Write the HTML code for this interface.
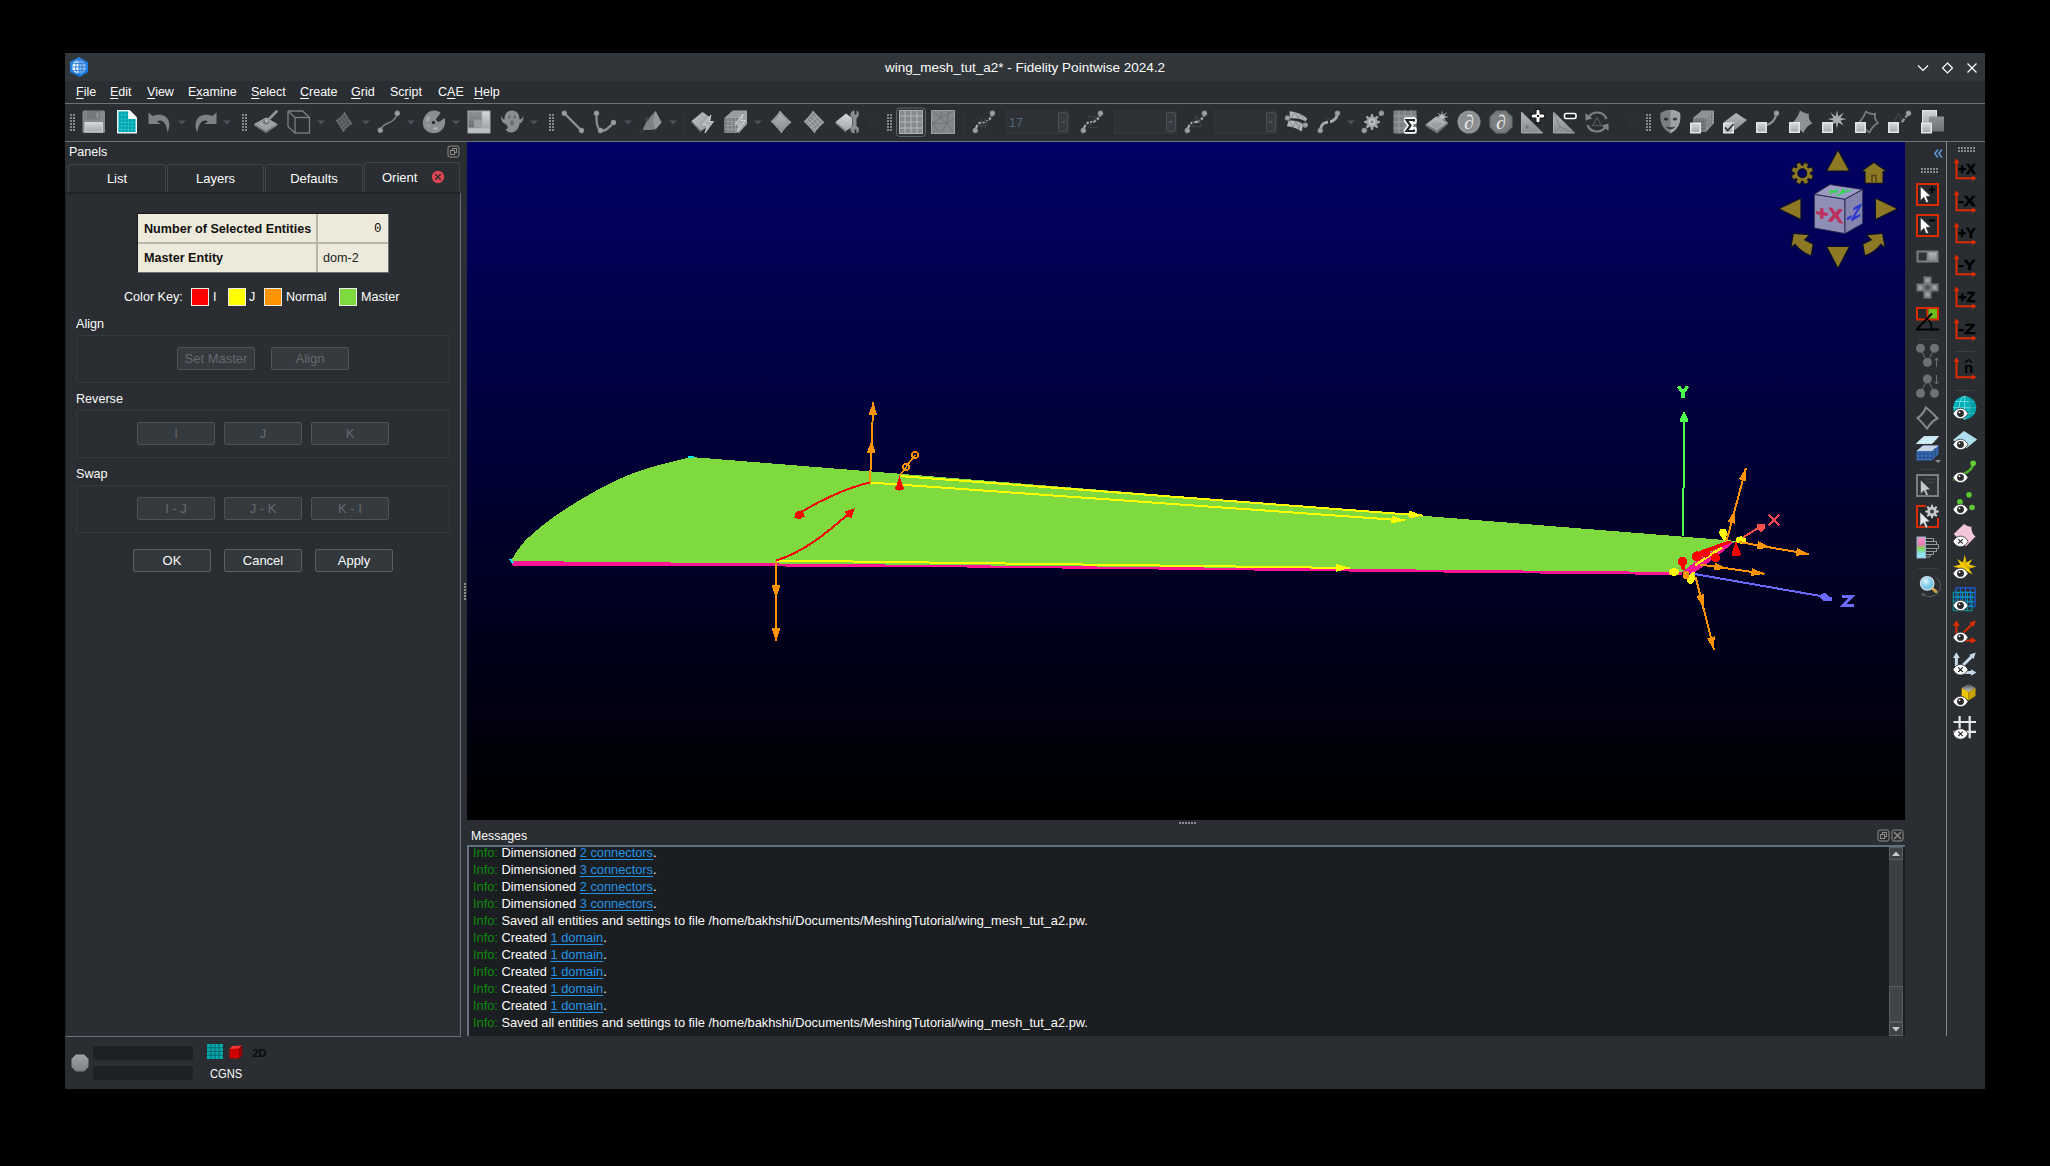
<!DOCTYPE html>
<html>
<head>
<meta charset="utf-8">
<title>wing_mesh_tut_a2* - Fidelity Pointwise 2024.2</title>
<style>
html,body{margin:0;padding:0;background:#000;}
body{width:2050px;height:1166px;position:relative;overflow:hidden;font-family:"Liberation Sans",sans-serif;font-size:13px;color:#fcfcfc;}
.abs{position:absolute;}
#win{position:absolute;left:65px;top:53px;width:1920px;height:1036px;background:#2a2e32;}
#titlebar{position:absolute;left:0;top:0;width:1920px;height:28px;background:#31363b;}
#title{position:absolute;left:0;top:0;width:1920px;height:28px;line-height:30px;text-align:center;font-size:13.5px;color:#fcfcfc;}
.menu{position:absolute;top:30px;height:18px;line-height:18px;font-size:12.5px;color:#fcfcfc;white-space:nowrap;}
.menu u{text-decoration:underline;text-underline-offset:2px;}
.hline{position:absolute;left:0;width:1920px;height:1px;background:#6f7275;}
.t{position:absolute;white-space:nowrap;}
/* panel */
.tab{position:absolute;top:110px;height:29px;border:1px solid #3f4448;border-bottom:none;border-radius:3px 3px 0 0;box-sizing:border-box;text-align:center;line-height:29px;font-size:13px;background:#2a2e32;}
.btn{position:absolute;height:23px;box-sizing:border-box;border:1px solid #5a5f63;border-radius:2px;background:#33383c;text-align:center;line-height:21px;font-size:13px;color:#fcfcfc;}
.btn.dis{color:#65696d;border-color:#4d5256;background:#353a3e;}
.grp{position:absolute;left:11px;width:374px;box-sizing:border-box;border:1px solid #34393d;border-radius:2px;}
.sw{position:absolute;top:235px;width:18px;height:18px;box-sizing:border-box;border:1px solid #ececec;}
/* viewport */
#vp{position:absolute;left:402px;top:89px;width:1438px;height:678px;background:linear-gradient(#000066,#000000);overflow:hidden;}
#msgbox{position:absolute;left:402px;top:792px;width:1438px;height:191px;background:#1b1e20;box-sizing:border-box;border-top:2px solid #5f7082;border-left:2px solid #6a7480;overflow:hidden;}
.ml{position:absolute;left:4px;height:17px;line-height:17px;font-size:12.8px;white-space:nowrap;color:#fcfcfc;}
.ml i{font-style:normal;color:#0d8a0d;}
.ml a{color:#2493e6;text-decoration:underline;text-decoration-thickness:1.3px;text-underline-offset:2px;}
</style>
</head>
<body>
<div id="win">
  <div id="titlebar"></div>
  <div id="title">wing_mesh_tut_a2* - Fidelity Pointwise 2024.2</div>
  <svg class="abs" style="left:4px;top:3px" width="22" height="22" viewBox="0 0 22 22"><defs><linearGradient id="hx" x1="0" y1="0" x2="1" y2="1"><stop offset="0" stop-color="#2f8fe8"/><stop offset="1" stop-color="#0a5fc0"/></linearGradient></defs><polygon points="10,1 19,6 19,16 10.500,21 1,16 1,6" fill="url(#hx)"/><polygon points="10.500,21 19,16 19,6 10.500,11" fill="#1f86ee" opacity="0.7"/><circle cx="10" cy="11" r="6.800" fill="#e8f2fc"/><path d="M10,4.200V17.800M3.200,11H16.800M4.500,7.500H15.500M4.500,14.500H15.500" stroke="#2f80dc" stroke-width="0.9" fill="none"/><ellipse cx="10" cy="11" rx="3.300" ry="6.800" fill="none" stroke="#2f80dc" stroke-width="0.9"/><path d="M10,4.200 A6.800,6.800 0 0 1 10,17.800Z" fill="#1a72d8" opacity="0.450"/></svg>
  <svg class="abs" style="left:1851px;top:7.5px" width="64" height="14" viewBox="0 0 64 14"><path d="M2,4.500L7,9.500L12,4.500" fill="none" stroke="#fcfcfc" stroke-width="1.2"/><path d="M31.500,2L36.500,7L31.500,12L26.500,7Z" fill="none" stroke="#fcfcfc" stroke-width="1.2"/><path d="M51.500,2.500L60.500,11.500M60.500,2.500L51.500,11.500" fill="none" stroke="#fcfcfc" stroke-width="1.2"/></svg>
  <!-- MENUBAR -->
  <div id="menubar">
    <div class="menu" style="left:11px"><u>F</u>ile</div>
    <div class="menu" style="left:45px"><u>E</u>dit</div>
    <div class="menu" style="left:82px"><u>V</u>iew</div>
    <div class="menu" style="left:123px">E<u>x</u>amine</div>
    <div class="menu" style="left:186px"><u>S</u>elect</div>
    <div class="menu" style="left:235px"><u>C</u>reate</div>
    <div class="menu" style="left:286px"><u>G</u>rid</div>
    <div class="menu" style="left:325px">Sc<u>r</u>ipt</div>
    <div class="menu" style="left:373px">C<u>A</u>E</div>
    <div class="menu" style="left:409px"><u>H</u>elp</div>
  </div>
  <div class="hline" style="top:50px"></div>
  <!-- TOOLBAR -->
  <div id="toolbar"><!--TB_START-->
<svg width="0" height="0" style="position:absolute"><defs>
<linearGradient id="g1" x1="0" y1="0" x2="0" y2="1"><stop offset="0" stop-color="#b4b7b9"/><stop offset="1" stop-color="#8a8d8f"/></linearGradient>
<linearGradient id="g2" x1="0" y1="0" x2="0" y2="1"><stop offset="0" stop-color="#d6d8d9"/><stop offset="1" stop-color="#a3a6a8"/></linearGradient>
<linearGradient id="g3" x1="0" y1="0" x2="0" y2="1"><stop offset="0" stop-color="#8e9294"/><stop offset="1" stop-color="#6d7173"/></linearGradient>
<linearGradient id="g4" x1="0" y1="0" x2="1" y2="1"><stop offset="0" stop-color="#c9cbcc"/><stop offset="1" stop-color="#8b8e90"/></linearGradient>
</defs></svg>
<svg class="abs" style="left:17px;top:57px;overflow:visible" width="24" height="24" viewBox="0 0 24 24"><rect x="0.5" y="0.5" width="22.5" height="22.5" rx="1.5" fill="#85898b"/><rect x="5" y="1" width="13" height="8.5" fill="#74787a"/><rect x="14.5" y="2.5" width="2" height="5" fill="#96999b"/><rect x="2" y="2" width="2" height="8" fill="#7b7f81"/><rect x="3" y="12.5" width="17.5" height="9.5" fill="url(#g2)" stroke="#e0e1e2" stroke-width="0.8"/></svg>
<svg class="abs" style="left:52px;top:57px;overflow:visible" width="24" height="24" viewBox="0 0 24 24"><polygon points="0,0 12.5,0 20,7.5 20,23.5 0,23.5" fill="#e8f6f7"/><polygon points="1.5,1.5 11,1.5 11,9 18.5,9 18.5,22 1.5,22" fill="#00a3ab"/><path d="M4.5 1.5V22M8 1.5V22M11.5 9V22M15 9V22M1.5 5H11M1.5 9H11M1.5 12.5H18.5M1.5 16H18.5M1.5 19.5H18.5" stroke="#2fc4cb" stroke-width="0.8"/><polygon points="12.5,0 20,7.5 12.5,7.5" fill="#ffffff"/></svg>
<svg class="abs" style="left:83px;top:57px;overflow:visible" width="24" height="24" viewBox="0 0 24 24"><path d="M0.5,2.5 L0.5,14 L12.5,14 L9,11.2 C14,9 18.5,12.5 19.5,22.5 C25,11 18,1 4.5,6 Z" fill="#7e8284"/></svg>
<svg class="abs" style="left:127.5px;top:57px;overflow:visible" width="24" height="24" viewBox="0 0 24 24"><g transform="translate(24,0) scale(-1,1)"><path d="M0.5,2.5 L0.5,14 L12.5,14 L9,11.2 C14,9 18.5,12.5 19.5,22.5 C25,11 18,1 4.5,6 Z" fill="#7e8284"/></g></svg>
<svg class="abs" style="left:189px;top:57px;overflow:visible" width="24" height="24" viewBox="0 0 24 24"><polygon points="0,14 12,7.5 23.5,14 12,21" fill="#a6a9ab"/><polygon points="0,14 12,21 23.5,14 23.5,15.5 12,23 0,15.5" fill="#7b7f81"/><polygon points="3.5,14 12,9.5 20,14 12,18.5" fill="none" stroke="#8b8e90" stroke-width="0.8"/><ellipse cx="12" cy="12" rx="3.5" ry="2.8" fill="#7b7f81"/><circle cx="13" cy="10.5" r="1.6" fill="#c9cbcc"/><path d="M14,10 L22.5,1.5" stroke="#94979a" stroke-width="2.6" stroke-linecap="round"/></svg>
<svg class="abs" style="left:222px;top:57px;overflow:visible" width="24" height="24" viewBox="0 0 24 24"><g fill="none" stroke="#7b7f81" stroke-width="1.3"><rect x="8" y="7.5" width="14.5" height="15.5"/><path d="M1,1 L15.5,1 L22.5,7.5 M1,1 L8,7.5 M1,1 L1,16.5 L8,23"/></g></svg>
<svg class="abs" style="left:270px;top:57px;overflow:visible" width="24" height="24" viewBox="0 0 24 24"><g transform="translate(9,12) rotate(8)"><path d="M-1,-10.500 C2,-7 5,-3 8.500,0.500 C5,3 2,7 1,10.500 C-2,7 -5,3 -8.500,-0.500 C-5,-3 -2,-7 -1,-10.500Z" fill="#686c6f"/><path d="M-4.700,-5.500 L4.700,5.500 M4.700,-5 L-4.200,5.500 M-6.500,-2.800 L2.500,8 M-2.700,-8 L6.500,3 M6.800,-2.500 L-2,8 M2.200,-7.500 L-6.700,2.700" stroke="#45494c" stroke-width="0.9"/></g></svg>
<svg class="abs" style="left:312px;top:57px;overflow:visible" width="24" height="24" viewBox="0 0 24 24"><path d="M3,20.5 C6,11 16,16 20.5,3.5" fill="none" stroke="#8e9193" stroke-width="1.2"/><circle cx="3.3" cy="20.3" r="2.7" fill="#8e9193"/><circle cx="20.3" cy="3.3" r="2.7" fill="#8e9193"/><circle cx="3.3" cy="20.3" r="1.2" fill="#a5a8aa"/><circle cx="20.3" cy="3.3" r="1.2" fill="#a5a8aa"/></svg>
<svg class="abs" style="left:357px;top:57px;overflow:visible" width="24" height="24" viewBox="0 0 24 24"><path d="M12,0.5 C16,0.5 18,2 18.5,3 L14,9 C14,11 16,12 18,11.5 L22.5,8 C24,12 23,18 18,21.5 C12,25 4,22.5 1.5,17 C-1,10 4,0.5 12,0.5 Z" fill="#8b8e90"/><ellipse cx="6" cy="9" rx="1.6" ry="2.8" fill="#a9acae" transform="rotate(15 6 9)"/><circle cx="11.5" cy="12.5" r="1.7" fill="#2a2e32"/><ellipse cx="13.5" cy="18.5" rx="2.6" ry="1.5" fill="#a9acae"/><ellipse cx="6.5" cy="16" rx="1.5" ry="1.2" fill="#9da0a2"/></svg>
<svg class="abs" style="left:402px;top:57px;overflow:visible" width="24" height="24" viewBox="0 0 24 24"><rect x="0.5" y="0.5" width="23" height="23" fill="#a9acae"/><rect x="1.5" y="1.5" width="13" height="16" fill="url(#g3)"/><rect x="7" y="9.5" width="8" height="8" fill="#9b9ea0"/><rect x="15.5" y="1.5" width="7" height="16" fill="url(#g2)"/><rect x="1.5" y="18.5" width="21" height="4" fill="#bfc1c2"/></svg>
<svg class="abs" style="left:435px;top:57px;overflow:visible" width="24" height="24" viewBox="0 0 24 24"><path d="M12,0.5 C17,0.5 19.5,4 19.5,9.5 C21.5,9.5 22.5,8 23,5.5 C24,9 22.5,13 19.5,13.5 C19,18 16,22.5 11,22.5 C8,22.5 6.5,21 5.5,19 C7.5,19.5 8,18 7.5,16 C6,14 5,14 4.5,13.5 C2,13 0.5,9 1.5,5.5 C2,8 3,9.5 4.5,9.5 C4.5,4 7,0.5 12,0.5 Z" fill="#8c8f91"/><ellipse cx="9.3" cy="7" rx="1.3" ry="2" fill="#6b6f71"/><ellipse cx="14.7" cy="7" rx="1.3" ry="2" fill="#6b6f71"/><ellipse cx="12" cy="13" rx="2" ry="2.8" fill="#6b6f71"/></svg>
<svg class="abs" style="left:496px;top:57px;overflow:visible" width="24" height="24" viewBox="0 0 24 24"><path d="M3.5,3.5 L20.5,20.5" stroke="#8e9193" stroke-width="2.4"/><circle cx="3.3" cy="3.3" r="2.7" fill="#8e9193"/><circle cx="20.5" cy="20.5" r="2.7" fill="#8e9193"/><circle cx="3.3" cy="3.3" r="1.2" fill="#a5a8aa"/><circle cx="20.5" cy="20.5" r="1.2" fill="#a5a8aa"/></svg>
<svg class="abs" style="left:528px;top:57px;overflow:visible" width="24" height="24" viewBox="0 0 24 24"><path d="M3.5,3.5 C3,14 5,19 7.5,20.5 C12,22 16,18 20.5,12.5" fill="none" stroke="#8e9193" stroke-width="2.2"/><circle cx="3.5" cy="3.3" r="2.7" fill="#8e9193"/><circle cx="20.5" cy="12.5" r="2.7" fill="#8e9193"/><circle cx="7.5" cy="20.5" r="2.7" fill="#8e9193"/><circle cx="3.5" cy="3.3" r="1.2" fill="#a5a8aa"/><circle cx="20.5" cy="12.5" r="1.2" fill="#a5a8aa"/><circle cx="7.5" cy="20.5" r="1.2" fill="#a5a8aa"/></svg>
<svg class="abs" style="left:574px;top:57px;overflow:visible" width="24" height="24" viewBox="0 0 24 24"><polygon points="16.5,1 22.5,12.5 16,20 3.5,20 8,10.5" fill="#7d8183"/><polygon points="16.5,1 22.5,12.5 16,20 14,11" fill="#95989a"/><circle cx="8" cy="9" r="2" fill="#3c4043"/><circle cx="2.5" cy="21" r="2" fill="#33373a"/><circle cx="15.5" cy="21" r="2" fill="#33373a"/></svg>
<svg class="abs" style="left:626px;top:57px;overflow:visible" width="24" height="24" viewBox="0 0 24 24"><polygon points="0.5,11 11.5,2 20,8 18,16 10,21" fill="url(#g4)"/><polygon points="0.5,11 10,21 10,22.5 0.5,12.5" fill="#7b7f81"/><path d="M6,6.5 L14.5,14 M3.5,9 L12,17.5 M8.5,4.5 L17,11" stroke="#9c9fa1" stroke-width="0.6"/><polygon points="20,5 12,15 16.5,15 14,23 22.5,11.5 18,11.5" fill="#a9acae" stroke="#dcddde" stroke-width="0.8"/></svg>
<svg class="abs" style="left:659px;top:57px;overflow:visible" width="24" height="24" viewBox="0 0 24 24"><polygon points="0.5,8 9,0.5 23,0.5 23,14 15,23 0.5,23" fill="#a2a5a7"/><rect x="0.5" y="8" width="14.5" height="15" fill="#7a7e80"/><path d="M4,8V23M7.7,8V23M11.3,8V23M0.5,11.7H15M0.5,15.5H15M0.5,19.2H15" stroke="#9fa2a4" stroke-width="0.8"/><path d="M9,0.5L0.5,8M13,0.5L4,8M17,0.5L8,8M21,0.5L12,8M3,5.5H18M6,3H21" stroke="#8a8d8f" stroke-width="0.5"/><polygon points="19,4 11,14 15.5,14 13,22 21.5,10.5 17,10.5" fill="#a9acae" stroke="#dcddde" stroke-width="0.8"/></svg>
<svg class="abs" style="left:705px;top:57px;overflow:visible" width="24" height="24" viewBox="0 0 24 24"><path d="M10,0.5 C12,3 18,9 21.5,12.5 C18,15 13,20 11.5,23.5 C9,20 4,14 0.5,11.5 C4,9 8.500,3 10,0.5 Z" fill="#a0a3a5"/><path d="M10,0.5 C12,3 18,9 21.5,12.5 C18,15 13,20 11.5,23.5 C9,20 4,14 0.5,11.5 C4,9 8.500,3 10,0.5 Z" fill="url(#g1)" stroke="#84888a" stroke-width="1" transform="translate(11,12) scale(0.8) translate(-11,-12)"/></svg>
<svg class="abs" style="left:738px;top:57px;overflow:visible" width="24" height="24" viewBox="0 0 24 24"><path d="M10,0.5 C12,3 18,9 21.5,12.5 C18,15 13,20 11.5,23.5 C9,20 4,14 0.5,11.5 C4,9 8.500,3 10,0.5 Z" fill="#a0a3a5"/><path d="M10,0.5 C12,3 18,9 21.5,12.5 C18,15 13,20 11.5,23.5 C9,20 4,14 0.5,11.5 C4,9 8.500,3 10,0.5 Z" fill="#85898b" transform="translate(11,12) scale(0.8) translate(-11,-12)"/><path d="M6.5,8.5 C10,11 13,15 15,18.5 M8.5,5.5 C12,8 15.5,12 18,15.5 M4,10.5 C8,13 10.5,17 12.5,20.5 M14,6 C12,9 8.5,13 4.5,14.5 M17,9 C14.5,12 11.5,16 8,18 " fill="none" stroke="#b4b7b9" stroke-width="0.8"/></svg>
<svg class="abs" style="left:770px;top:57px;overflow:visible" width="24" height="24" viewBox="0 0 24 24"><polygon points="0.5,12 11,3.5 17,8 17,17 11,21" fill="url(#g2)"/><polygon points="0.5,12 11,21 11,22.5 0.5,13.5" fill="#8a8d8f"/><path d="M5,8.5L13,15M3,10.5L11,18" stroke="#b0b3b5" stroke-width="0.6"/><path d="M19.5,0.5 C16,1 14.5,4 16,7 L17.5,8 L17.5,16 L16,17 C14.5,20 16,23 19.5,23.5 L19.5,19.5 L21.5,19.5 L21.5,23.5 C24,22.5 24.5,19 23,17 L21.5,16 L21.5,8 L23,7 C24.5,4 24,1.5 21.5,0.5 L21.5,4.5 L19.5,4.5 Z" fill="#8b8e90"/></svg>
<svg class="abs" style="left:834px;top:57px;overflow:visible" width="24" height="24" viewBox="0 0 24 24"><rect x="-2.500" y="-2" width="29" height="28.500" rx="3" fill="#2f3337" stroke="#5d6266" stroke-width="1"/><rect x="0.5" y="0.5" width="23" height="23" fill="#85898b"/><path d="M6,0.5V23.5M12,0.5V23.5M18,0.5V23.5M0.5,6H23.5M0.5,12H23.5M0.5,18H23.5" stroke="#b6b9bb" stroke-width="1"/><rect x="0.5" y="0.5" width="23" height="23" fill="none" stroke="#aeb1b3" stroke-width="1"/></svg>
<svg class="abs" style="left:866px;top:57px;overflow:visible" width="24" height="24" viewBox="0 0 24 24"><rect x="0.5" y="0.5" width="23" height="23" fill="#84888a"/><path d="M0.5,0.5L9,8L23.5,0.5M9,8L0.5,14L10,23.5M9,8L16,13L23.5,8M16,13L10,23.5M16,13L23.5,23.5M0.5,14L16,13M9,8L12,0.5M16,13L18,0.5M0.5,23.5L6,19" stroke="#6b6f71" stroke-width="0.9" fill="none"/><rect x="0.5" y="0.5" width="23" height="23" fill="none" stroke="#9da0a2" stroke-width="1"/></svg>
<svg class="abs" style="left:907px;top:57px;overflow:visible" width="24" height="24" viewBox="0 0 24 24"><path d="M3.5,20.5 C5,12 9,12.5 12,12 C15,11.5 18.5,10 20.5,3.5" fill="none" stroke="#a9acae" stroke-width="2.2" stroke-dasharray="6 1.5 2.5 1.5"/><circle cx="3.3" cy="20.5" r="2.7" fill="#8e9193"/><circle cx="20.5" cy="3.3" r="2.7" fill="#8e9193"/><circle cx="3.3" cy="20.5" r="1.2" fill="#a5a8aa"/><circle cx="20.5" cy="3.3" r="1.2" fill="#a5a8aa"/><path d="M9.5,8V19M13.5,8V19M7,11.5H16M7,15.5H16" stroke="#3e4346" stroke-width="1.2"/></svg>
<svg class="abs" style="left:1015px;top:57px;overflow:visible" width="24" height="24" viewBox="0 0 24 24"><path d="M3.5,20.5 C5,12 9,12.5 12,12 C15,11.5 18.5,10 20.5,3.5" fill="none" stroke="#a9acae" stroke-width="2.2" stroke-dasharray="6 1.5 2.5 1.5"/><circle cx="3.3" cy="20.5" r="2.7" fill="#8e9193"/><circle cx="20.5" cy="3.3" r="2.7" fill="#8e9193"/><circle cx="3.3" cy="20.5" r="1.2" fill="#a5a8aa"/><circle cx="20.5" cy="3.3" r="1.2" fill="#a5a8aa"/><path d="M8,6.5H16L9,17.5H18" stroke="#3e4346" stroke-width="1.2" fill="none"/></svg>
<svg class="abs" style="left:1119px;top:57px;overflow:visible" width="24" height="24" viewBox="0 0 24 24"><path d="M3.5,20.5 C5,12 9,12.5 12,12 C15,11.5 18.5,10 20.5,3.5" fill="none" stroke="#a9acae" stroke-width="2.2" stroke-dasharray="6 1.5 2.5 1.5"/><circle cx="3.3" cy="20.5" r="2.7" fill="#8e9193"/><circle cx="20.5" cy="3.3" r="2.7" fill="#8e9193"/><circle cx="3.3" cy="20.5" r="1.2" fill="#a5a8aa"/><circle cx="20.5" cy="3.3" r="1.2" fill="#a5a8aa"/><path d="M12.5,6L17.5,16.5H7.5Z" stroke="#3e4346" stroke-width="1.2" fill="none"/></svg>
<svg class="abs" style="left:1219px;top:57px;overflow:visible" width="24" height="24" viewBox="0 0 24 24"><path d="M5.400,1.300 C13,2 19,4.500 23.200,8.800 L21.600,11.600 C17,8.500 12,8 6.300,8.500 Z" fill="#b4b7b9"/><path d="M4.400,10.700 C9,10 14,11 18.500,13.500 C19,16 18.500,19 17.300,21.600 C13,18 8,16.500 2.900,16.300 Z" fill="#b4b7b9"/><path d="M6.300,8.500L11,2.300M11,2.300L14.500,8.500M14.500,8.500L17,4.500M17,4.500L21.600,11.600M4.400,10.700L9.500,17M9.500,17L11.500,11M11.500,11L15,19.500M15,19.500L16,12.300" stroke="#7b7f81" stroke-width="0.8" fill="none"/><circle cx="3.500" cy="7.900" r="2.700" fill="#8e9193"/><circle cx="3.500" cy="7.900" r="1.200" fill="#a5a8aa"/><circle cx="21.300" cy="15.100" r="2.700" fill="#8e9193"/><circle cx="21.300" cy="15.100" r="1.200" fill="#a5a8aa"/></svg>
<svg class="abs" style="left:1252px;top:57px;overflow:visible" width="24" height="24" viewBox="0 0 24 24"><path d="M3.5,20.5 C4,13 8,12.5 12,12 C16,11.5 19.5,10 20.5,3.5" fill="none" stroke="#a6a9ab" stroke-width="2.8"/><path d="M8,8.5H16" stroke="#3e4346" stroke-width="1.2"/><rect x="11" y="10" width="2" height="5" fill="#2a2e32"/><circle cx="3.3" cy="20.5" r="2.7" fill="#8e9193"/><circle cx="20.5" cy="3.3" r="2.7" fill="#8e9193"/><circle cx="3.3" cy="20.5" r="1.2" fill="#a5a8aa"/><circle cx="20.5" cy="3.3" r="1.2" fill="#a5a8aa"/></svg>
<svg class="abs" style="left:1296px;top:57px;overflow:visible" width="24" height="24" viewBox="0 0 24 24"><path d="M3.5,20.5 L20.5,3.5" stroke="#8e9193" stroke-width="1.5" stroke-dasharray="2 1.5"/><polygon points="18.9,11.0 18.9,13.0 16.3,13.4 15.8,14.7 17.3,16.9 15.9,18.3 13.7,16.8 12.4,17.3 12.0,19.9 10.0,19.9 9.6,17.3 8.3,16.8 6.1,18.3 4.7,16.9 6.2,14.7 5.7,13.4 3.1,13.0 3.1,11.0 5.7,10.6 6.2,9.3 4.7,7.1 6.1,5.7 8.3,7.2 9.6,6.7 10.0,4.1 12.0,4.1 12.4,6.7 13.7,7.2 15.9,5.7 17.3,7.1 15.8,9.3 16.3,10.6" fill="#a2a5a7"/><circle cx="11" cy="12" r="0" fill="#2a2e32"/><circle cx="11" cy="12" r="3.3" fill="#c5c7c8"/><circle cx="11" cy="12" r="1.8" fill="#85898b"/><circle cx="3.3" cy="20.5" r="2.7" fill="#8e9193"/><circle cx="20.5" cy="3.3" r="2.7" fill="#8e9193"/><circle cx="3.3" cy="20.5" r="1.2" fill="#a5a8aa"/><circle cx="20.5" cy="3.3" r="1.2" fill="#a5a8aa"/></svg>
<svg class="abs" style="left:1328px;top:57px;overflow:visible" width="24" height="24" viewBox="0 0 24 24"><rect x="0.5" y="0.5" width="23" height="23" fill="#7c8082"/><path d="M6,0.5V23.5M12,0.5V23.5M18,0.5V23.5M0.5,6H23.5M0.5,12H23.5M0.5,18H23.5" stroke="#9fa2a4" stroke-width="0.9"/><path d="M21,11.500 V10 H13.500 L17.500,15.500 L13.500,21 H21 V19.500" fill="none" stroke="#ffffff" stroke-width="5.500" stroke-linejoin="round" stroke-linecap="round"/><path d="M21,11.500 V10 H13.500 L17.500,15.500 L13.500,21 H21 V19.500" fill="none" stroke="#23272a" stroke-width="2.200" stroke-linejoin="miter"/></svg>
<svg class="abs" style="left:1360px;top:57px;overflow:visible" width="24" height="24" viewBox="0 0 24 24"><polygon points="0.5,14.5 11,6.5 23,12.5 12,21.5" fill="url(#g1)"/><polygon points="0.5,14.5 12,21.5 23,12.5 23,14 12,23.5 0.5,16" fill="#74787a"/><polygon points="4,14.5 11,9 19.5,13 12,19" fill="none" stroke="#c0c2c3" stroke-width="0.6"/><path d="M17,0 L17.8,5 L22.5,2 L19,6 L24,7 L19,8 L21.5,11.5 L17.6,9 L17,13 L16.2,9 L12.5,11.5 L15,8 L10.5,7 L15,6 L12,2.5 L16.2,5 Z" fill="#b9bbbd"/></svg>
<svg class="abs" style="left:1392px;top:57px;overflow:visible" width="24" height="24" viewBox="0 0 24 24"><circle cx="12" cy="12" r="11.5" fill="#8b8e90"/><circle cx="12" cy="12" r="10" fill="none" stroke="#9a9d9f" stroke-width="1"/><text x="12" y="18.5" text-anchor="middle" font-family="Liberation Serif" font-style="italic" font-size="20" fill="#e8e9ea">∂</text></svg>
<svg class="abs" style="left:1424px;top:57px;overflow:visible" width="24" height="24" viewBox="0 0 24 24"><polygon points="7,0.5 17,0.5 23.5,7 23.5,17 17,23.5 7,23.5 0.5,17 0.5,7" fill="#6f7375"/><polygon points="7.8,2.5 16.2,2.5 21.5,7.8 21.5,16.2 16.2,21.5 7.8,21.5 2.5,16.2 2.5,7.8" fill="#7b7f81"/><text x="12" y="18.5" text-anchor="middle" font-family="Liberation Serif" font-style="italic" font-size="20" fill="#e8e9ea">∂</text></svg>
<svg class="abs" style="left:1456px;top:57px;overflow:visible" width="24" height="24" viewBox="0 0 24 24"><polygon points="0.5,2 0.5,23 21.5,23" fill="url(#g1)" stroke="#b9bbbd" stroke-width="0.8"/><circle cx="6" cy="17" r="1.7" fill="#74787a"/><path d="M17,0.5V11.5M11.5,6H22.5" stroke="#1d2023" stroke-width="5.5" stroke-linecap="round"/><path d="M17,1.2V10.8M12.2,6H21.8" stroke="#ffffff" stroke-width="3" stroke-linecap="round"/><rect x="16" y="5" width="2" height="2" fill="#1d2023"/></svg>
<svg class="abs" style="left:1488px;top:57px;overflow:visible" width="24" height="24" viewBox="0 0 24 24"><polygon points="0.5,2 0.5,23 21.5,23" fill="url(#g1)" stroke="#b9bbbd" stroke-width="0.8"/><path d="M0.5,2L7,17L21.5,23M0.5,23L7,17" stroke="#74787a" stroke-width="0.8" fill="none"/><rect x="11.5" y="3.5" width="11.5" height="5" rx="1.5" fill="#1d2023" stroke="#ffffff" stroke-width="1.6"/></svg>
<svg class="abs" style="left:1520px;top:57px;overflow:visible" width="24" height="24" viewBox="0 0 24 24"><path d="M3.2,8 A10,10 0 0 1 21.5,9" fill="none" stroke="#7e8284" stroke-width="2.2"/><path d="M20.8,16 A10,10 0 0 1 2.5,15" fill="none" stroke="#7e8284" stroke-width="2.2"/><polygon points="0.5,3 7.5,8.5 0.5,10.5" fill="#7e8284"/><polygon points="23.5,21 16.5,15.5 23.5,13.5" fill="#7e8284"/><polygon points="12,7.5 16.5,15.5 7.5,15.5" fill="none" stroke="#50555a" stroke-width="1.3"/></svg>
<svg class="abs" style="left:1594px;top:57px;overflow:visible" width="24" height="24" viewBox="0 0 24 24"><path d="M1.5,3 C5,0.5 9,0 11.5,0 C14,0 18,0.5 21,3 C22,10 21,18 11.5,23.5 C2,18 0.5,10 1.5,3 Z" fill="#7b7f81"/><path d="M11.5,0 C14,0 18,0.5 21,3 C22,10 21,18 11.5,23.5 Z" fill="#a0a3a5"/><ellipse cx="7" cy="9" rx="2.3" ry="1.5" fill="#2f3336"/><ellipse cx="16" cy="9" rx="2.3" ry="1.5" fill="#3a3e41"/><path d="M7.5,17 C10,19.5 13,19.5 15.5,17 C13,18 10,18 7.5,17Z" fill="#2f3336" stroke="#2f3336" stroke-width="0.8"/></svg>
<svg class="abs" style="left:1625px;top:57px;overflow:visible" width="24" height="24" viewBox="0 0 24 24"><polygon points="3,8 12,0.5 24,0.5 24,13 16,22 3,22" fill="#9c9fa1"/><rect x="3" y="8" width="13" height="14" fill="#7c8082"/><path d="M6.2,8V22M9.5,8V22M12.7,8V22M3,11.5H16M3,15H16M3,18.5H16M12,0.5L3,8M15,0.5L6.2,8M18,0.5L9.5,8M21,0.5L12.7,8M24,0.5L16,8M16,8V22M18.7,5.5V19M21.3,3V16M16,11.5L24,4M16,15L24,7.5M16,18.5L24,10" stroke="#5f6365" stroke-width="0.6"/><rect x="0.75" y="13.25" width="9.5" height="9.5" fill="url(#g2)" stroke="#e4e5e6" stroke-width="1.5"/></svg>
<svg class="abs" style="left:1658px;top:57px;overflow:visible" width="24" height="24" viewBox="0 0 24 24"><polygon points="1,12 13,3 24,10 12,20" fill="url(#g1)"/><path d="M5,12L13,6.5L20,10.5M8,15L16,8.5" stroke="#b9bbbd" stroke-width="0.5" fill="none"/><rect x="0.75" y="13.25" width="9.5" height="9.5" fill="url(#g2)" stroke="#e4e5e6" stroke-width="1.5"/><path d="M2,17.5L4.8,20.5L10.5,14" stroke="#2a2e32" stroke-width="1.6" fill="none"/></svg>
<svg class="abs" style="left:1691px;top:57px;overflow:visible" width="24" height="24" viewBox="0 0 24 24"><path d="M8,15 C14,15 19,11 20.5,3.5" fill="none" stroke="#8e9193" stroke-width="2.2"/><circle cx="20.5" cy="3.3" r="2.7" fill="#8e9193"/><circle cx="20.5" cy="3.3" r="1.2" fill="#a5a8aa"/><rect x="0.75" y="12.75" width="9.5" height="9.5" fill="url(#g2)" stroke="#e4e5e6" stroke-width="1.5"/></svg>
<svg class="abs" style="left:1724px;top:57px;overflow:visible" width="24" height="24" viewBox="0 0 24 24"><path d="M11,0.5 C14,3 19,4 20,3.5 C19,8 21,11 23.5,13.5 C19,15 16,19 14.5,23 L3,13 C7,10 9.5,5 11,0.5Z" fill="#8e9193"/><rect x="0.75" y="12.75" width="9.5" height="9.5" fill="url(#g2)" stroke="#e4e5e6" stroke-width="1.5"/></svg>
<svg class="abs" style="left:1757px;top:57px;overflow:visible" width="24" height="24" viewBox="0 0 24 24"><path d="M15,0 L16.3,6.5 L21.5,2.5 L18.5,8 L24.5,9 L18.5,10.5 L21.5,15.5 L16.3,12.5 L15,18.5 L13.7,12.5 L8.5,15.5 L11.5,10.5 L5.5,9 L11.5,8 L8.5,2.5 L13.7,6.5 Z" fill="#a9acae"/><rect x="0.75" y="12.75" width="9.5" height="9.5" fill="url(#g2)" stroke="#e4e5e6" stroke-width="1.5"/></svg>
<svg class="abs" style="left:1790px;top:57px;overflow:visible" width="24" height="24" viewBox="0 0 24 24"><path d="M11,1.5 C14,4 19,4.5 20,4 C19,8 21,11 23,13 C19,15 16,19 14.5,22.5 L3.5,13 C7,10 9.5,5 11,1.5Z" fill="none" stroke="#7e8284" stroke-width="1.6"/><rect x="0.75" y="12.75" width="9.5" height="9.5" fill="url(#g2)" stroke="#e4e5e6" stroke-width="1.5"/></svg>
<svg class="abs" style="left:1823px;top:57px;overflow:visible" width="24" height="24" viewBox="0 0 24 24"><path d="M10.5,3.5L15,12.5H6Z" fill="none" stroke="#3e4346" stroke-width="1.2"/><path d="M14,12 L20.5,3.5" stroke="#8e9193" stroke-width="2.4" stroke-dasharray="4 1.5"/><circle cx="20.5" cy="3.3" r="2.7" fill="#8e9193"/><circle cx="20.5" cy="3.3" r="1.2" fill="#a5a8aa"/><rect x="0.75" y="12.75" width="9.5" height="9.5" fill="url(#g2)" stroke="#e4e5e6" stroke-width="1.5"/></svg>
<svg class="abs" style="left:1856px;top:57px;overflow:visible" width="24" height="24" viewBox="0 0 24 24"><rect x="1.5" y="0.5" width="14" height="14" fill="url(#g2)" stroke="#e4e5e6" stroke-width="1"/><rect x="8" y="6.500" width="15" height="15" fill="url(#g3)"/><rect x="0.75" y="13.25" width="9.5" height="9.5" fill="url(#g2)" stroke="#e4e5e6" stroke-width="1.5"/></svg>
<svg class="abs" style="left:113px;top:67px" width="8" height="5" viewBox="0 0 8 5"><polygon points="0,0.5 8,0.5 4,4.5" fill="#4d5459"/></svg>
<svg class="abs" style="left:158px;top:67px" width="8" height="5" viewBox="0 0 8 5"><polygon points="0,0.5 8,0.5 4,4.5" fill="#4d5459"/></svg>
<svg class="abs" style="left:251.5px;top:67px" width="8" height="5" viewBox="0 0 8 5"><polygon points="0,0.5 8,0.5 4,4.5" fill="#4d5459"/></svg>
<svg class="abs" style="left:296.5px;top:67px" width="8" height="5" viewBox="0 0 8 5"><polygon points="0,0.5 8,0.5 4,4.5" fill="#4d5459"/></svg>
<svg class="abs" style="left:341.5px;top:67px" width="8" height="5" viewBox="0 0 8 5"><polygon points="0,0.5 8,0.5 4,4.5" fill="#4d5459"/></svg>
<svg class="abs" style="left:386.5px;top:67px" width="8" height="5" viewBox="0 0 8 5"><polygon points="0,0.5 8,0.5 4,4.5" fill="#4d5459"/></svg>
<svg class="abs" style="left:464.5px;top:67px" width="8" height="5" viewBox="0 0 8 5"><polygon points="0,0.5 8,0.5 4,4.5" fill="#4d5459"/></svg>
<svg class="abs" style="left:558.5px;top:67px" width="8" height="5" viewBox="0 0 8 5"><polygon points="0,0.5 8,0.5 4,4.5" fill="#4d5459"/></svg>
<svg class="abs" style="left:604px;top:67px" width="8" height="5" viewBox="0 0 8 5"><polygon points="0,0.5 8,0.5 4,4.5" fill="#4d5459"/></svg>
<svg class="abs" style="left:689px;top:67px" width="8" height="5" viewBox="0 0 8 5"><polygon points="0,0.5 8,0.5 4,4.5" fill="#4d5459"/></svg>
<svg class="abs" style="left:1281.5px;top:67px" width="8" height="5" viewBox="0 0 8 5"><polygon points="0,0.5 8,0.5 4,4.5" fill="#4d5459"/></svg>
<div class="abs" style="left:5px;top:61px;width:5px;height:17px;background:radial-gradient(circle at 1px 1px,#84888b 0.9px,transparent 1.2px) 0 0/3px 3px;"></div>
<div class="abs" style="left:177px;top:61px;width:5px;height:17px;background:radial-gradient(circle at 1px 1px,#84888b 0.9px,transparent 1.2px) 0 0/3px 3px;"></div>
<div class="abs" style="left:483.5px;top:61px;width:5px;height:17px;background:radial-gradient(circle at 1px 1px,#84888b 0.9px,transparent 1.2px) 0 0/3px 3px;"></div>
<div class="abs" style="left:821.5px;top:61px;width:5px;height:17px;background:radial-gradient(circle at 1px 1px,#84888b 0.9px,transparent 1.2px) 0 0/3px 3px;"></div>
<div class="abs" style="left:1581px;top:61px;width:5px;height:17px;background:radial-gradient(circle at 1px 1px,#84888b 0.9px,transparent 1.2px) 0 0/3px 3px;"></div>
<div class="t" style="left:802px;top:59px;font-size:14px;line-height:18px;color:#30353a;letter-spacing:-1px;">&#187;</div>
<div class="t" style="left:1562px;top:59px;font-size:14px;line-height:18px;color:#30353a;letter-spacing:-1px;">&#187;</div>
<div class="abs" style="left:619px;top:59px;width:1px;height:20px;background:#33373b;"></div>
<div class="abs" style="left:897.5px;top:59px;width:1px;height:20px;background:#33373b;"></div>
<div class="abs" style="left:941px;top:57px;width:63px;height:24px;background:#2e3236;box-sizing:border-box;border:1px solid #34383c;"></div>
<div class="abs" style="left:993px;top:59px;width:10px;height:20px;background:#373b40;box-sizing:border-box;border:1px solid #4a4f54;border-radius:2px;"></div>
<svg class="abs" style="left:995.5px;top:67.5px" width="5" height="3" viewBox="0 0 5 3"><polygon points="0,0 5,0 2.5,3" fill="#4d5459"/></svg>
<div class="abs" style="left:1048.5px;top:57px;width:63px;height:24px;background:#2e3236;box-sizing:border-box;border:1px solid #34383c;"></div>
<div class="abs" style="left:1100.5px;top:59px;width:10px;height:20px;background:#373b40;box-sizing:border-box;border:1px solid #4a4f54;border-radius:2px;"></div>
<svg class="abs" style="left:1103.0px;top:67.5px" width="5" height="3" viewBox="0 0 5 3"><polygon points="0,0 5,0 2.5,3" fill="#4d5459"/></svg>
<div class="abs" style="left:1148.5px;top:57px;width:63px;height:24px;background:#2e3236;box-sizing:border-box;border:1px solid #34383c;"></div>
<div class="abs" style="left:1200.5px;top:59px;width:10px;height:20px;background:#373b40;box-sizing:border-box;border:1px solid #4a4f54;border-radius:2px;"></div>
<svg class="abs" style="left:1203.0px;top:67.5px" width="5" height="3" viewBox="0 0 5 3"><polygon points="0,0 5,0 2.5,3" fill="#4d5459"/></svg>
<div class="t" style="left:944px;top:61px;font-size:12.5px;line-height:18px;color:#526579;">17</div>
<!--TB_END--></div>
  <div class="hline" style="top:88px"></div>
  <!-- LEFT PANEL -->
  <div id="panel">
    <div class="t" style="left:4px;top:90px;height:18px;line-height:18px;font-size:12.5px;">Panels</div>
    <svg class="abs" style="left:382px;top:92px" width="13" height="13" viewBox="0 0 13 13"><rect x="1" y="1" width="11" height="11" rx="2" fill="none" stroke="#8f8b84" stroke-width="1"/><rect x="5.5" y="3.5" width="4" height="4" fill="none" stroke="#8f8b84" stroke-width="1"/><rect x="3.5" y="5.5" width="4" height="4" fill="#2a2e32" stroke="#8f8b84" stroke-width="1"/></svg>
    <!-- frame -->
    <div class="abs" style="left:0px;top:139px;width:396px;height:845px;box-sizing:border-box;border:1px solid #1f2326;border-top:2px solid #202428;border-right:1px solid #63707d;border-bottom:1px solid #63707d;"></div>
    <div class="tab" style="left:3px;width:98px;top:111px;height:28px;line-height:28px;">List</div>
    <div class="tab" style="left:102px;width:97px;top:111px;height:28px;line-height:28px;">Layers</div>
    <div class="tab" style="left:200px;width:98px;top:111px;height:28px;line-height:28px;">Defaults</div>
    <div class="tab" style="left:299px;width:96px;top:109px;height:30px;line-height:30px;text-align:left;padding-left:17px;">Orient</div>
    <svg class="abs" style="left:366px;top:117px" width="14" height="14" viewBox="0 0 14 14"><circle cx="7" cy="7" r="6.2" fill="#da4453"/><path d="M4.3 4.3L9.7 9.7M9.7 4.3L4.3 9.7" stroke="#2a2e32" stroke-width="1.3"/></svg>
    <!-- table -->
    <div class="abs" style="left:72px;top:160px;width:252px;height:60px;background:#eeeadb;box-sizing:border-box;border:1px solid #17191c;border-right-color:#66707c;border-bottom-color:#66707c;"></div>
    <div class="abs" style="left:73px;top:189px;width:250px;height:2px;background:#b9b5a8;"></div>
    <div class="abs" style="left:251px;top:161px;width:2px;height:58px;background:#b9b5a8;"></div>
    <div class="t" style="left:79px;top:167px;height:18px;line-height:18px;font-size:12.6px;font-weight:bold;color:#111;">Number of Selected Entities</div>
    <div class="t" style="left:79px;top:196px;height:18px;line-height:18px;font-size:12.6px;font-weight:bold;color:#111;">Master Entity</div>
    <div class="t" style="left:309px;top:167px;height:18px;line-height:18px;font-size:12.5px;font-family:'Liberation Mono',monospace;color:#111;">0</div>
    <div class="t" style="left:258px;top:196px;height:18px;line-height:18px;font-size:12.6px;color:#222;">dom-2</div>
    <!-- color key -->
    <div class="t" style="left:59px;top:235px;height:18px;line-height:18px;font-size:12.6px;">Color Key:</div>
    <div class="sw" style="left:126px;background:#ff0000;"></div><div class="t" style="left:148px;top:235px;line-height:18px;font-size:12.6px;">I</div>
    <div class="sw" style="left:163px;background:#ffff00;"></div><div class="t" style="left:184px;top:235px;line-height:18px;font-size:12.6px;">J</div>
    <div class="sw" style="left:199px;background:#ff9400;"></div><div class="t" style="left:221px;top:235px;line-height:18px;font-size:12.6px;">Normal</div>
    <div class="sw" style="left:274px;background:#7fda3f;"></div><div class="t" style="left:296px;top:235px;line-height:18px;font-size:12.6px;">Master</div>
    <!-- groups -->
    <div class="t" style="left:11px;top:262px;line-height:18px;font-size:12.6px;">Align</div>
    <div class="grp" style="top:282px;height:48px;"></div>
    <div class="btn dis" style="left:112px;top:294px;width:78px;">Set Master</div>
    <div class="btn dis" style="left:206px;top:294px;width:78px;">Align</div>
    <div class="t" style="left:11px;top:337px;line-height:18px;font-size:12.6px;">Reverse</div>
    <div class="grp" style="top:357px;height:48px;"></div>
    <div class="btn dis" style="left:72px;top:369px;width:78px;">I</div>
    <div class="btn dis" style="left:159px;top:369px;width:78px;">J</div>
    <div class="btn dis" style="left:246px;top:369px;width:78px;">K</div>
    <div class="t" style="left:11px;top:412px;line-height:18px;font-size:12.6px;">Swap</div>
    <div class="grp" style="top:432px;height:48px;"></div>
    <div class="btn dis" style="left:72px;top:444px;width:78px;">I - J</div>
    <div class="btn dis" style="left:159px;top:444px;width:78px;">J - K</div>
    <div class="btn dis" style="left:246px;top:444px;width:78px;">K - I</div>
    <div class="btn" style="left:68px;top:496px;width:78px;">OK</div>
    <div class="btn" style="left:159px;top:496px;width:78px;">Cancel</div>
    <div class="btn" style="left:250px;top:496px;width:78px;">Apply</div>
    <!-- splitter grip -->
    <div class="abs" style="left:399px;top:530px;width:2px;height:17px;background:repeating-linear-gradient(#8a8d8f 0 2px,transparent 2px 3px);"></div>
  </div>
  <!-- VIEWPORT -->
  <div id="vp">
<svg class="abs" style="left:0;top:0" width="1438" height="678" viewBox="467 142 1438 678" shape-rendering="crispEdges"><path d="M511.0,561.0 L511.0,561.0 L510.8,561.0 L510.8,560.9 L511.1,560.3 L512.0,558.9 L513.6,556.5 L515.7,553.2 L518.2,549.4 L521.0,545.6 L524.0,542.0 L527.2,538.7 L530.8,535.4 L534.5,532.1 L538.3,528.9 L542.0,525.9 L545.5,523.1 L548.9,520.5 L552.4,518.0 L556.0,515.4 L560.0,512.7 L564.4,509.8 L569.2,506.7 L574.1,503.6 L579.1,500.5 L584.0,497.6 L588.8,494.8 L593.6,492.1 L598.4,489.4 L603.2,486.9 L608.0,484.4 L612.8,482.0 L617.6,479.8 L622.4,477.6 L627.2,475.5 L632.0,473.6 L636.8,471.8 L641.6,470.2 L646.4,468.6 L651.2,467.2 L656.0,465.8 L661.0,464.4 L666.2,463.1 L671.3,461.9 L676.0,460.8 L680.0,459.8 L683.2,459.0 L685.9,458.3 L688.0,457.8 L689.7,457.3 L691.0,457.0 L1737,541 C1720,548 1695,560 1681,573 Z" fill="#7fda3f"/>
<polygon points="511,561 1682,572 1682,575 900,566.800 513,565.800" fill="#ff1493"/>
<path d="M510,559 L513,563" stroke="#00e5ff" stroke-width="2"/><path d="M688,457 L694,457" stroke="#00e5ff" stroke-width="1.5"/>
<line x1="899" y1="476" x2="1423" y2="515.6" stroke="#ffff00" stroke-width="2"/><polygon points="1423.0,515.6 1408.7,518.5 1409.3,510.6" fill="#ffff00"/>
<line x1="870" y1="482.5" x2="1405.5" y2="520.5" stroke="#ffff00" stroke-width="2"/><polygon points="1405.5,520.5 1391.3,523.5 1391.8,515.5" fill="#ffff00"/>
<line x1="776" y1="560.5" x2="1350" y2="568" stroke="#ffff00" stroke-width="2"/><polygon points="1350.0,568.0 1335.9,571.8 1336.1,563.8" fill="#ffff00"/>
<line x1="870" y1="482.5" x2="873.3" y2="402.3" stroke="#ff9400" stroke-width="2"/><polygon points="873.3,402.3 877.3,415.5 868.3,415.1" fill="#ff9400"/><polygon points="871.7,440.0 875.7,453.2 866.7,452.8" fill="#ff9400"/>
<line x1="776" y1="560.5" x2="776" y2="641" stroke="#ff9400" stroke-width="2"/><polygon points="776.0,641.0 771.5,628.0 780.5,628.0" fill="#ff9400"/><polygon points="776.0,598.3 771.5,585.3 780.5,585.3" fill="#ff9400"/>
<path d="M870,482.5 C845,488 815,503 795,516" stroke="#ff0000" stroke-width="2" fill="none"/>
<polygon points="793,518 802,509 805,517" fill="#ff0000"/><circle cx="799" cy="515" r="4" fill="#ff0000"/>
<path d="M776,560.5 C805,552 830,530 852,511" stroke="#ff0000" stroke-width="2" fill="none"/>
<polygon points="855,508 851,519 844,512" fill="#ff0000"/><circle cx="849" cy="514" r="3.5" fill="#ff0000"/>
<path d="M899.4,476 L915,455" stroke="#ff9400" stroke-width="1.5"/><circle cx="906" cy="467" r="3.2" fill="none" stroke="#ff9400" stroke-width="1.5"/><circle cx="915" cy="455" r="3.2" fill="none" stroke="#ff9400" stroke-width="1.5"/>
<polygon points="899.5,476 904,489 895.5,489" fill="#ff0000"/><ellipse cx="899.5" cy="488" rx="4.5" ry="2.5" fill="#ff0000"/>
<line x1="1683.200" y1="536" x2="1684" y2="416" stroke="#4dff4d" stroke-width="2"/><polygon points="1684,410.500 1688,419 1688,422 1680,422 1680,419" fill="#4dff4d"/>
<path d="M1678.500,386.500 L1683,393 L1687.500,386.500 M1683,392 V398" fill="none" stroke="#4dff4d" stroke-width="3.400" stroke-linejoin="miter"/>
<path d="M1701,552.5 L1729,542.500" stroke="#ff0000" stroke-width="4" stroke-linecap="round"/>
<path d="M1683,571.500 C1696,560 1715,548 1735,541 C1722,553 1706,565 1692,574 Z" fill="#ff1493"/>
<path d="M1695,565 L1722,547.500" stroke="#ffff00" stroke-width="2.500"/>
<circle cx="1682.6" cy="561.5" r="4.6" fill="#ff0000"/>
<circle cx="1697" cy="556.4" r="5" fill="#ff0000"/>
<circle cx="1705.5" cy="553" r="4.5" fill="#ff0000"/>
<circle cx="1715.6" cy="557.7" r="4.5" fill="#ff0000"/>
<path d="M1679.500,563 L1686,563 L1684.500,570 L1682,570Z" fill="#ff0000"/>
<path d="M1719,532 C1719,527.500 1726.500,527.500 1727,532 C1727,536 1725.500,540 1725,542 C1723,539 1719.500,536 1719,532Z" fill="#ffff00"/>
<ellipse cx="1741" cy="540" rx="5.500" ry="3.600" fill="#ffff00"/>
<ellipse cx="1674" cy="572" rx="5.500" ry="3.800" fill="#ffff00"/>
<path d="M1687,579 C1688,575 1692,572 1695,571.500 C1696,576 1695,582 1692,584 C1689,585 1686.500,582 1687,579Z" fill="#ffff00"/>
<ellipse cx="1686" cy="575" rx="3.200" ry="4" fill="#ff9400"/>
<line x1="1743" y1="537.500" x2="1759" y2="527.500" stroke="#ff5050" stroke-width="2"/><polygon points="1757.200,524.200 1765,524.200 1765,528 1761,532 1757.200,529" fill="#ff5050"/>
<path d="M1768.800,514.800 L1779.200,525.200 M1779.200,514.800 L1768.800,525.200" fill="none" stroke="#ff5050" stroke-width="2.800"/>
<line x1="1694.5" y1="574" x2="1832" y2="598" stroke="#6a6aff" stroke-width="2"/><polygon points="1832,598.500 1832,600.500 1823,601 1820,598 1821.500,594 1825,593" fill="#6a6aff"/>
<path d="M1842,596.500 H1852 L1843.500,605.500 H1854.200" fill="none" stroke="#6a6aff" stroke-width="3"/><path d="M1851,595 H1854.200 V598Z" fill="#6a6aff"/>
<line x1="1726.5" y1="541" x2="1746" y2="467.8" stroke="#ff9400" stroke-width="2"/><polygon points="1746.0,467.8 1746.5,481.4 1738.8,479.3" fill="#ff9400"/><polygon points="1734.7,510.3 1735.2,523.8 1727.5,521.8" fill="#ff9400"/>
<line x1="1739" y1="542" x2="1809" y2="554.2" stroke="#ff9400" stroke-width="2"/><polygon points="1809.0,554.2 1795.5,555.9 1796.9,548.0" fill="#ff9400"/><polygon points="1770.5,547.5 1757.0,549.2 1758.4,541.3" fill="#ff9400"/>
<line x1="1700" y1="564.5" x2="1764.5" y2="573.8" stroke="#ff9400" stroke-width="2"/><polygon points="1764.5,573.8 1751.1,575.9 1752.2,568.0" fill="#ff9400"/><polygon points="1727.1,568.4 1713.7,570.5 1714.8,562.6" fill="#ff9400"/>
<line x1="1695.6" y1="577" x2="1714" y2="650" stroke="#ff9400" stroke-width="2"/><polygon points="1714.0,650.0 1706.9,638.4 1714.7,636.4" fill="#ff9400"/><polygon points="1703.3,607.7 1696.3,596.0 1704.0,594.1" fill="#ff9400"/>
<polygon points="1736,541 1741,554 1740,556 1732,556 1732,553" fill="#ff0000"/></svg>
<!--GIZ_START-->
<svg class="abs" style="left:0;top:0" width="1438" height="678" viewBox="467 142 1438 678"><polygon points="1838,151 1848.6,170.6 1827.4,170.6" fill="#8d7923" stroke="#0b0b33" stroke-width="3" stroke-linejoin="round" paint-order="stroke"/>
<polygon points="1838,267.2 1848.6,247 1827.4,247" fill="#8d7923" stroke="#0b0b33" stroke-width="3" stroke-linejoin="round" paint-order="stroke"/>
<polygon points="1780,208.8 1800.4,199 1800.4,218.800" fill="#8d7923" stroke="#0b0b33" stroke-width="3" stroke-linejoin="round" paint-order="stroke"/>
<polygon points="1896.300,208.800 1876,199 1876,218.800" fill="#8d7923" stroke="#0b0b33" stroke-width="3" stroke-linejoin="round" paint-order="stroke"/>
<path d="M1809.8,174.2 L1812.7,175.7 L1811.4,179.0 L1808.3,178.0 L1807.0,179.3 L1808.0,182.4 L1804.7,183.7 L1803.2,180.8 L1801.4,180.8 L1799.9,183.7 L1796.6,182.4 L1797.6,179.3 L1796.3,178.0 L1793.2,179.0 L1791.9,175.7 L1794.8,174.2 L1794.8,172.4 L1791.9,170.9 L1793.2,167.6 L1796.3,168.6 L1797.6,167.3 L1796.6,164.2 L1799.9,162.9 L1801.4,165.8 L1803.2,165.8 L1804.7,162.9 L1808.0,164.2 L1807.0,167.3 L1808.3,168.6 L1811.4,167.6 L1812.7,170.9 L1809.8,172.4Z M1807.3,173.3 A5,5 0 1 0 1797.3,173.3 A5,5 0 1 0 1807.3,173.3Z" fill-rule="evenodd" fill="#8d7923" stroke="#0b0b33" stroke-width="3" stroke-linejoin="round" paint-order="stroke"/>
<path d="M1873.800,163 L1885.300,171 L1882.500,171 L1882.500,182.800 L1865.600,182.800 L1865.600,171 L1862.800,171 Z" fill="#8d7923" stroke="#0b0b33" stroke-width="3" stroke-linejoin="round" paint-order="stroke"/>
<path d="M1872,182.500 V175.500 H1876 V182.500" fill="none" stroke="#4d4215" stroke-width="1.400"/>
<path d="M1793.900,234.100 L1808.500,235.300 L1803.800,240 C1808,242 1811,243.500 1812.600,244.600 L1810.800,255.100 C1805,253 1799,249 1795.100,243.500 L1791.600,246.400 Z" fill="#8d7923" stroke="#0b0b33" stroke-width="3" stroke-linejoin="round" paint-order="stroke"/>
<g transform="translate(3676,0) scale(-1,1)"><path d="M1793.900,234.100 L1808.500,235.300 L1803.800,240 C1808,242 1811,243.500 1812.600,244.600 L1810.800,255.100 C1805,253 1799,249 1795.100,243.500 L1791.600,246.400 Z" fill="#8d7923" stroke="#0b0b33" stroke-width="3" stroke-linejoin="round" paint-order="stroke"/></g>
<polygon points="1814.300,194.300 1845,199.200 1845,233.600 1814.300,228" fill="#8e8eb6" stroke="#26264e" stroke-width="0.9"/>
<polygon points="1814.300,194.300 1830,184.600 1862.700,189.500 1845,199.200" fill="#9c9cc2" stroke="#26264e" stroke-width="0.9"/>
<polygon points="1845,199.200 1862.700,189.500 1862.700,223.600 1845,233.600" fill="#8484ae" stroke="#26264e" stroke-width="0.9"/>
<g transform="matrix(1,0.16,0,1,1815.500,197.500)"><text x="0" y="21.500" font-family="Liberation Sans" font-weight="bold" font-size="19.5" fill="#bd2f5c" stroke="#bd2f5c" stroke-width="0.7" textLength="27.500" lengthAdjust="spacingAndGlyphs">+X</text></g>
<g transform="matrix(1,-0.550,0,1,1846.500,223.500)"><text x="0" y="0" font-family="Liberation Sans" font-weight="bold" font-style="italic" font-size="17" fill="#2a35d0" stroke="#2a35d0" stroke-width="0.6" textLength="14.500" lengthAdjust="spacingAndGlyphs">-Z</text></g>
<g transform="matrix(1,0.150,-1.500,0.900,1838,186)"><text x="0" y="9" font-family="Liberation Sans" font-weight="bold" font-size="10" fill="#2fd455" stroke="#2fd455" stroke-width="0.5" textLength="17" lengthAdjust="spacingAndGlyphs">+Y</text></g></svg>
<!--GIZ_END-->
</div>
  <!-- MESSAGES -->
  <div id="msgs">
    <div class="abs" style="left:1114px;top:769px;width:17px;height:2px;background:repeating-linear-gradient(90deg,#8a8d8f 0 2px,transparent 2px 3px);"></div>
    <div class="t" style="left:406px;top:774px;height:18px;line-height:18px;font-size:12.3px;">Messages</div>
    <svg class="abs" style="left:1812px;top:776px" width="13" height="13" viewBox="0 0 13 13"><rect x="1" y="1" width="11" height="11" rx="2" fill="none" stroke="#8f8b84" stroke-width="1"/><rect x="5.5" y="3.5" width="4" height="4" fill="none" stroke="#8f8b84" stroke-width="1"/><rect x="3.5" y="5.5" width="4" height="4" fill="#2a2e32" stroke="#8f8b84" stroke-width="1"/></svg>
    <svg class="abs" style="left:1826px;top:776px" width="13" height="13" viewBox="0 0 13 13"><rect x="1" y="1" width="11" height="11" rx="2" fill="none" stroke="#8f8b84" stroke-width="1"/><path d="M3 3L10 10M10 3L3 10" stroke="#8f8b84" stroke-width="1.6"/></svg>
    <div id="msgbox">
      <div class="ml" style="top:-3px"><i>Info:</i> Dimensioned <a>2 connectors</a>.</div>
      <div class="ml" style="top:14px"><i>Info:</i> Dimensioned <a>3 connectors</a>.</div>
      <div class="ml" style="top:31px"><i>Info:</i> Dimensioned <a>2 connectors</a>.</div>
      <div class="ml" style="top:48px"><i>Info:</i> Dimensioned <a>3 connectors</a>.</div>
      <div class="ml" style="top:65px"><i>Info:</i> Saved all entities and settings to file /home/bakhshi/Documents/MeshingTutorial/wing_mesh_tut_a2.pw.</div>
      <div class="ml" style="top:82px"><i>Info:</i> Created <a>1 domain</a>.</div>
      <div class="ml" style="top:99px"><i>Info:</i> Created <a>1 domain</a>.</div>
      <div class="ml" style="top:116px"><i>Info:</i> Created <a>1 domain</a>.</div>
      <div class="ml" style="top:133px"><i>Info:</i> Created <a>1 domain</a>.</div>
      <div class="ml" style="top:150px"><i>Info:</i> Created <a>1 domain</a>.</div>
      <div class="ml" style="top:167px"><i>Info:</i> Saved all entities and settings to file /home/bakhshi/Documents/MeshingTutorial/wing_mesh_tut_a2.pw.</div>
      <div class="abs" style="left:1420px;top:0;width:14px;height:189px;background:#3b4045;"></div>
      <div class="abs" style="left:1420px;top:0;width:14px;height:13px;box-sizing:border-box;border:1px solid #585d62;background:#3e4348;"></div>
      <div class="abs" style="left:1420px;top:175px;width:14px;height:14px;box-sizing:border-box;border:1px solid #585d62;background:#3e4348;"></div>
      <div class="abs" style="left:1420px;top:139px;width:14px;height:36px;box-sizing:border-box;border:1px solid #585d62;background:#40454a;"></div>
      <svg class="abs" style="left:1420px;top:0" width="14" height="189"><polygon points="3,9 11,9 7,4.5" fill="#c8c8c8"/><polygon points="3,180 11,180 7,184.5" fill="#c8c8c8"/></svg>
    </div>
  </div>
  <!-- RIGHT TOOLBARS -->
  <div id="rtb"><!--RTB_START-->
<div class="abs" style="left:1880.5px;top:89px;width:1.5px;height:894px;background:#85888b;"></div>
<svg class="abs" style="left:1869px;top:96px;overflow:visible" width="9" height="9" viewBox="0 0 9 9" ><path d="M4,0.5L0.8,4.5L4,8.5M8,0.5L4.8,4.5L8,8.5" fill="none" stroke="#5b9bd8" stroke-width="1.5"/></svg>
<div class="abs" style="left:1856px;top:115px;width:18px;height:5px;background:radial-gradient(circle at 1px 1px,#84888b 0.9px,transparent 1.2px) 0 0/3px 3px;"></div>
<div class="abs" style="left:1893px;top:94px;width:18px;height:5px;background:radial-gradient(circle at 1px 1px,#84888b 0.9px,transparent 1.2px) 0 0/3px 3px;"></div>
<svg class="abs" style="left:1851px;top:130px;overflow:visible" width="23" height="23" viewBox="0 0 23 23" ><rect x="1" y="1" width="21" height="21" fill="#26292c" stroke="#dd2c00" stroke-width="2"/><path transform="translate(4.5,3.5) scale(1)" d="M0,0 L0,14 L3.4,10.8 L5.8,16.2 L8,15.2 L5.6,9.9 L10,9.6 Z" fill="#ffffff" stroke="#33373a" stroke-width="0.6"/><path d="M16,3.5V10M12.8,6.7H19.2" stroke="#000" stroke-width="1.8"/></svg>
<svg class="abs" style="left:1851px;top:161px;overflow:visible" width="23" height="23" viewBox="0 0 23 23" ><rect x="1" y="1" width="21" height="21" fill="#26292c" stroke="#dd2c00" stroke-width="2"/><path transform="translate(4.5,3.5) scale(1)" d="M0,0 L0,14 L3.4,10.8 L5.8,16.2 L8,15.2 L5.6,9.9 L10,9.6 Z" fill="#ffffff" stroke="#33373a" stroke-width="0.6"/><path d="M13,6.5H19.2" stroke="#000" stroke-width="1.8"/></svg>
<svg class="abs" style="left:1851px;top:197px;overflow:visible" width="23" height="13" viewBox="0 0 23 13" ><rect x="0.5" y="0.5" width="22" height="12" fill="#7b7f82"/><rect x="2.5" y="2.5" width="8" height="8" fill="#2f3337"/><rect x="12.5" y="2.5" width="8" height="8" fill="url(#g1)"/></svg>
<svg class="abs" style="left:1851px;top:223px;overflow:visible" width="23" height="23" viewBox="0 0 23 23" ><path d="M7.5,0.5H15.5V7.5H22.5V15.5H15.5V22.5H7.5V15.5H0.5V7.5H7.5Z" fill="#74787b"/><rect x="9.5" y="2.5" width="4" height="4" fill="#9da0a2"/><rect x="9.5" y="16.5" width="4" height="4" fill="#9da0a2"/><rect x="2.5" y="9.5" width="4" height="4" fill="#9da0a2"/><rect x="16.5" y="9.5" width="4" height="4" fill="#9da0a2"/><rect x="9.5" y="9.500" width="4" height="4" fill="#4b4f52"/></svg>
<svg class="abs" style="left:1851px;top:254px;overflow:visible" width="23" height="24" viewBox="0 0 23 24" ><rect x="1" y="1" width="21" height="11.5" fill="#26292c" stroke="#dd2c00" stroke-width="2"/><path d="M11.5,1V12" stroke="#dd2c00" stroke-width="2"/><rect x="12.500" y="2" width="8.500" height="9.500" fill="#6cc01e"/><path d="M0,22.5H23M0.500,22.500L16,6.500" stroke="#000" stroke-width="1.800" fill="none"/><path d="M11,12 C14,14 16,18 15.500,22.500" stroke="#000" stroke-width="1.500" fill="none"/></svg>
<div class="abs" style="left:1853px;top:286px;width:20px;height:1px;background:#3a3f43;"></div>
<svg class="abs" style="left:1851px;top:290px;overflow:visible" width="23" height="25" viewBox="0 0 23 25" ><path d="M4.500,5.300L11.400,19.400L18.500,5.300" stroke="#6d7174" stroke-width="1" fill="none"/><circle cx="4.500" cy="5.300" r="4.500" fill="#6d7174"/><circle cx="18.500" cy="5.300" r="4.500" fill="#6d7174"/><circle cx="11.400" cy="19.400" r="4.500" fill="#6d7174"/><path d="M20.500,24V15M18.500,17.500L20.500,15L22.500,17.500" stroke="#6d7174" stroke-width="1" fill="none"/></svg>
<svg class="abs" style="left:1851px;top:320px;overflow:visible" width="23" height="25" viewBox="0 0 23 25" ><path d="M4.500,20.300L11.400,5.900L18.500,20.300" stroke="#6d7174" stroke-width="1" fill="none"/><circle cx="4.500" cy="20.300" r="4.500" fill="#6d7174"/><circle cx="18.500" cy="20.300" r="4.500" fill="#6d7174"/><circle cx="11.400" cy="5.900" r="4.500" fill="#6d7174"/><path d="M20.500,2V11M18.500,8.500L20.500,11L22.500,8.500" stroke="#6d7174" stroke-width="1" fill="none"/></svg>
<svg class="abs" style="left:1851px;top:353px;overflow:visible" width="23" height="24" viewBox="0 0 23 24" ><path d="M10,1.500 C13,4 17,7 21.500,12.500 C17,14 14,18 11,22.500 C8,19 5,15 1.500,12 C5,10 8,6 10,1.500 Z" fill="none" stroke="#85898c" stroke-width="2"/></svg>
<svg class="abs" style="left:1851px;top:383px;overflow:visible" width="24" height="26" viewBox="0 0 24 26" ><polygon points="0.500,7.500 8,0.500 22.500,0.500 16,7.500" fill="#b5e6f7" stroke="#e9f8fd" stroke-width="0.8"/><path d="M3,5.500H18.500M5.500,3H20.500M6,7.500L13,0.500M11,7.500L18,0.500" stroke="#ffffff" stroke-width="0.6"/><polygon points="0.500,15 7,9.500 22.500,9.500 22.500,18 16,24.500 0.500,24.500" fill="#3c6fb5"/><polygon points="0.500,15 7,9.500 22.500,9.500 16,15" fill="#c9d3e6"/><path d="M0.500,18H16M0.500,21.500H16M4,15V24.500M8,15V24.500M12,15V24.500M16,15V24.500M16,18L22.500,12M16,21.500L22.500,15M19,12V21.500" stroke="#1c3f7a" stroke-width="0.7"/><polygon points="19,24 25,24 22,27" fill="#8e9193"/></svg>
<div class="abs" style="left:1853px;top:416px;width:20px;height:1px;background:#3a3f43;"></div>
<svg class="abs" style="left:1851px;top:421px;overflow:visible" width="23" height="23" viewBox="0 0 23 23" ><rect x="1" y="1" width="21" height="21" fill="#2f3337" stroke="#7b7f82" stroke-width="2"/><path transform="translate(4.5,6) scale(1)" d="M0,0 L0,14 L3.4,10.8 L5.8,16.2 L8,15.2 L5.6,9.9 L10,9.6 Z" fill="#c5c7c9" stroke="#33373a" stroke-width="0.6"/><path d="M10,5.500 C12,4.500 14,6.500 16,5.500 S18.500,5 19.500,5M11,8.500 C13,7.500 15,9.500 17,8.500 S18.500,8 19.500,8" stroke="#4a4f53" stroke-width="0.8" fill="none"/></svg>
<svg class="abs" style="left:1851px;top:452px;overflow:visible" width="23" height="23" viewBox="0 0 23 23" ><path d="M10,1H1V22H22V13" fill="none" stroke="#dd2c00" stroke-width="2"/><rect x="2" y="2" width="19" height="19" fill="#26292c"/><path d="M10,1H1V22H22V13" fill="none" stroke="#dd2c00" stroke-width="2"/><polygon points="22.7,5.6 22.7,7.4 20.5,7.7 20.0,8.8 21.4,10.6 20.1,11.9 18.3,10.5 17.2,11.0 16.9,13.2 15.1,13.2 14.8,11.0 13.7,10.5 11.9,11.9 10.6,10.6 12.0,8.8 11.5,7.7 9.3,7.4 9.3,5.6 11.5,5.3 12.0,4.2 10.6,2.4 11.9,1.1 13.7,2.5 14.8,2.0 15.1,-0.2 16.9,-0.2 17.2,2.0 18.3,2.5 20.1,1.1 21.4,2.4 20.0,4.2 20.5,5.3" fill="#c9cbcc"/><circle cx="16" cy="6.500" r="2" fill="#3a3e41"/><path transform="translate(4,7) scale(1)" d="M0,0 L0,14 L3.4,10.8 L5.8,16.2 L8,15.2 L5.6,9.9 L10,9.6 Z" fill="#e6e7e8" stroke="#33373a" stroke-width="0.6"/></svg>
<svg class="abs" style="left:1851px;top:483px;overflow:visible" width="24" height="23" viewBox="0 0 24 23" ><defs><linearGradient id="cb" x1="0" y1="0" x2="0" y2="1"><stop offset="0.100" stop-color="#f08fc0"/><stop offset="0.350" stop-color="#e57fb0"/><stop offset="0.550" stop-color="#7dd958"/><stop offset="0.800" stop-color="#8fe0f5"/><stop offset="1" stop-color="#9ee6fa"/></linearGradient></defs><rect x="1" y="1" width="8.500" height="21" fill="url(#cb)" stroke="#8fb8c8" stroke-width="1"/><path d="M9.500,2.500H17.500V5.500H20.500V8.500H22.500V12.500H20.500V15.500H17.500V18.500H14V21H9.500M9.500,5.500H17.500M9.500,8.500H20.500M9.500,12.500H20.500M9.500,15.500H17.500M9.500,18.500H14" fill="none" stroke="#a3a6a8" stroke-width="0.9"/></svg>
<div class="abs" style="left:1853px;top:515px;width:20px;height:1px;background:#3a3f43;"></div>
<svg class="abs" style="left:1850px;top:519px;overflow:visible" width="26" height="26" viewBox="0 0 26 26" ><defs><radialGradient id="mg" cx="0.400" cy="0.350" r="0.700"><stop offset="0" stop-color="#e6f7fd"/><stop offset="0.450" stop-color="#8fd3f0"/><stop offset="1" stop-color="#5fb4d8"/></radialGradient></defs><path d="M20.500,5 A10,10 0 0 1 9,23" fill="none" stroke="#5a5e61" stroke-width="1"/><polygon points="6,21 10.500,21.500 8,25" fill="#5a5e61"/><path d="M17,16L21,19.700" stroke="#c9a34a" stroke-width="3" stroke-linecap="round"/><circle cx="12.200" cy="11.300" r="6.800" fill="url(#mg)" stroke="#d8e4ea" stroke-width="1.200"/></svg>
<svg class="abs" style="left:1888px;top:105px;overflow:visible" width="24" height="24" viewBox="0 0 24 24" ><path d="M3.500,3V20.300H21" fill="none" stroke="#dd2c00" stroke-width="2"/><polygon points="3.500,0.300 6.300,5 0.700,5" fill="#dd2c00"/><polygon points="23.700,20.300 19,17.500 19,23.100" fill="#dd2c00"/><text x="22.500" y="15.500" text-anchor="end" font-family="Liberation Sans" font-weight="bold" font-size="15.5" fill="#000" stroke="#000" stroke-width="0.5" textLength="17.5" lengthAdjust="spacingAndGlyphs">+X</text></svg>
<svg class="abs" style="left:1888px;top:137px;overflow:visible" width="24" height="24" viewBox="0 0 24 24" ><path d="M3.500,3V20.300H21" fill="none" stroke="#dd2c00" stroke-width="2"/><polygon points="3.500,0.300 6.300,5 0.700,5" fill="#dd2c00"/><polygon points="23.700,20.300 19,17.500 19,23.100" fill="#dd2c00"/><text x="22.500" y="15.500" text-anchor="end" font-family="Liberation Sans" font-weight="bold" font-size="15.5" fill="#000" stroke="#000" stroke-width="0.5" textLength="17.5" lengthAdjust="spacingAndGlyphs">-X</text></svg>
<svg class="abs" style="left:1888px;top:169px;overflow:visible" width="24" height="24" viewBox="0 0 24 24" ><path d="M3.500,3V20.300H21" fill="none" stroke="#dd2c00" stroke-width="2"/><polygon points="3.500,0.300 6.300,5 0.700,5" fill="#dd2c00"/><polygon points="23.700,20.300 19,17.500 19,23.100" fill="#dd2c00"/><text x="22.500" y="15.500" text-anchor="end" font-family="Liberation Sans" font-weight="bold" font-size="15.5" fill="#000" stroke="#000" stroke-width="0.5" textLength="17.5" lengthAdjust="spacingAndGlyphs">+Y</text></svg>
<svg class="abs" style="left:1888px;top:201px;overflow:visible" width="24" height="24" viewBox="0 0 24 24" ><path d="M3.500,3V20.300H21" fill="none" stroke="#dd2c00" stroke-width="2"/><polygon points="3.500,0.300 6.300,5 0.700,5" fill="#dd2c00"/><polygon points="23.700,20.300 19,17.500 19,23.100" fill="#dd2c00"/><text x="22.500" y="15.500" text-anchor="end" font-family="Liberation Sans" font-weight="bold" font-size="15.5" fill="#000" stroke="#000" stroke-width="0.5" textLength="17.5" lengthAdjust="spacingAndGlyphs">-Y</text></svg>
<svg class="abs" style="left:1888px;top:233px;overflow:visible" width="24" height="24" viewBox="0 0 24 24" ><path d="M3.500,3V20.300H21" fill="none" stroke="#dd2c00" stroke-width="2"/><polygon points="3.500,0.300 6.300,5 0.700,5" fill="#dd2c00"/><polygon points="23.700,20.300 19,17.500 19,23.100" fill="#dd2c00"/><text x="22.500" y="15.500" text-anchor="end" font-family="Liberation Sans" font-weight="bold" font-size="15.5" fill="#000" stroke="#000" stroke-width="0.5" textLength="17.5" lengthAdjust="spacingAndGlyphs">+Z</text></svg>
<svg class="abs" style="left:1888px;top:265px;overflow:visible" width="24" height="24" viewBox="0 0 24 24" ><path d="M3.500,3V20.300H21" fill="none" stroke="#dd2c00" stroke-width="2"/><polygon points="3.500,0.300 6.300,5 0.700,5" fill="#dd2c00"/><polygon points="23.700,20.300 19,17.500 19,23.100" fill="#dd2c00"/><text x="22.500" y="15.500" text-anchor="end" font-family="Liberation Sans" font-weight="bold" font-size="15.5" fill="#000" stroke="#000" stroke-width="0.5" textLength="17.5" lengthAdjust="spacingAndGlyphs">-Z</text></svg>
<div class="abs" style="left:1890px;top:298px;width:20px;height:1px;background:#3a3f43;"></div>
<svg class="abs" style="left:1888px;top:304px;overflow:visible" width="24" height="24" viewBox="0 0 24 24" ><path d="M3.500,3V20.300H21" fill="none" stroke="#dd2c00" stroke-width="2"/><polygon points="3.500,0.300 6.300,5 0.700,5" fill="#dd2c00"/><polygon points="23.700,20.300 19,17.500 19,23.100" fill="#dd2c00"/><text x="15.500" y="16" text-anchor="middle" font-family="Liberation Sans" font-weight="bold" font-size="15" fill="#000">n</text><path d="M12,5.500L15.500,2.500L19,5.500" fill="none" stroke="#000" stroke-width="1.300"/></svg>
<div class="abs" style="left:1890px;top:336.5px;width:20px;height:1px;background:#3a3f43;"></div>
<svg class="abs" style="left:1888px;top:343px;overflow:visible" width="24" height="24" viewBox="0 0 24 24" ><circle cx="11.700" cy="11.700" r="11.500" fill="#00b1b9"/><path d="M11.700,0.200V23.200M0.200,11.700H23.200M2,5.500H21.500M2,17.500H21.500" stroke="#7fe3e8" stroke-width="0.800" fill="none"/><ellipse cx="11.700" cy="11.700" rx="5.500" ry="11.500" fill="none" stroke="#7fe3e8" stroke-width="0.800"/><path d="M11.700,0.200 A11.500,11.500 0 0 1 11.700,23.200 A16,16 0 0 0 11.700,0.200" fill="#009098" opacity="0.5"/><path d="M0.0,17.5 C3.5,10.5 11.5,10.5 15.0,17.5 C11.5,24.5 3.5,24.5 0.0,17.5Z" fill="#ffffff" stroke="#2a2e32" stroke-width="0.8"/><circle cx="7.5" cy="17.5" r="3.400" fill="#2b2b2b"/><circle cx="6.5" cy="16.3" r="0.900" fill="#fff"/></svg>
<svg class="abs" style="left:1888px;top:375px;overflow:visible" width="24" height="24" viewBox="0 0 24 24" ><polygon points="0.500,12 11,3.500 23.500,11.500 13,20" fill="#a8dcf0" stroke="#d5f0fa" stroke-width="0.800"/><path d="M4,13.500L14,6M8,16L18,8.500M5,8.500L17,16M8.500,6L20,13.500" stroke="#c9ecf8" stroke-width="0.500"/><path d="M0.0,16.5 C3.5,9.5 11.5,9.5 15.0,16.5 C11.5,23.5 3.5,23.5 0.0,16.5Z" fill="#ffffff" stroke="#2a2e32" stroke-width="0.8"/><circle cx="7.5" cy="16.5" r="3.400" fill="#2b2b2b"/><circle cx="6.5" cy="15.3" r="0.900" fill="#fff"/></svg>
<svg class="abs" style="left:1888px;top:407px;overflow:visible" width="24" height="24" viewBox="0 0 24 24" ><path d="M1,20.500 C1,16 6,15 11,13.500 C16,12 19,9 20.200,3.500" fill="none" stroke="#4caf2a" stroke-width="2.600"/><circle cx="20.200" cy="3.300" r="2.800" fill="#66d13a"/><path d="M0.0,17.4 C3.5,10.399999999999999 11.5,10.399999999999999 15.0,17.4 C11.5,24.4 3.5,24.4 0.0,17.4Z" fill="#ffffff" stroke="#2a2e32" stroke-width="0.8"/><circle cx="7.5" cy="17.4" r="3.400" fill="#2b2b2b"/><circle cx="6.5" cy="16.2" r="0.900" fill="#fff"/></svg>
<svg class="abs" style="left:1888px;top:438px;overflow:visible" width="24" height="24" viewBox="0 0 24 24" ><circle cx="16" cy="3.800" r="2.800" fill="#5cc832"/><circle cx="6.900" cy="10.900" r="2.800" fill="#5cc832"/><circle cx="19" cy="16.500" r="2.800" fill="#5cc832"/><path d="M0.0,18.5 C3.5,11.5 11.5,11.5 15.0,18.5 C11.5,25.5 3.5,25.5 0.0,18.5Z" fill="#ffffff" stroke="#2a2e32" stroke-width="0.8"/><circle cx="7.5" cy="18.5" r="3.400" fill="#2b2b2b"/><circle cx="6.5" cy="17.3" r="0.900" fill="#fff"/></svg>
<svg class="abs" style="left:1888px;top:470px;overflow:visible" width="24" height="24" viewBox="0 0 24 24" ><path d="M11,1 C13.500,3 17,4 18.500,3.500 C18,8 20,11.500 22.600,13.600 L13,23.200 L0.700,10.900 Z" fill="#f3c6d9"/><path d="M0.0,18.4 C3.5,11.399999999999999 11.5,11.399999999999999 15.0,18.4 C11.5,25.4 3.5,25.4 0.0,18.4Z" fill="#ffffff" stroke="#2a2e32" stroke-width="0.8"/><path d="M5.2,16.099999999999998L9.8,20.7M9.8,16.099999999999998L5.2,20.7" stroke="#222" stroke-width="1.100"/></svg>
<svg class="abs" style="left:1888px;top:502px;overflow:visible" width="24" height="24" viewBox="0 0 24 24" ><path d="M11.700,0 L13.500,7.500 L19.500,4 L16,9.500 L23.400,11.500 L16,13.500 L19.500,19.500 L13.500,16 L11.700,23 L9.900,16 L4,19.500 L7.400,13.500 L0,11.500 L7.400,9.500 L4,4 L9.900,7.500 Z" fill="#f2cb05"/><path d="M11.700,0 L13.500,7.500 L11.700,11.500 Z M23.400,11.500 L16,13.500 L11.700,11.500Z" fill="#c9a400"/><path d="M0.0,18.4 C3.5,11.399999999999999 11.5,11.399999999999999 15.0,18.4 C11.5,25.4 3.5,25.4 0.0,18.4Z" fill="#ffffff" stroke="#2a2e32" stroke-width="0.8"/><circle cx="7.5" cy="18.4" r="3.400" fill="#2b2b2b"/><circle cx="6.5" cy="17.2" r="0.900" fill="#fff"/></svg>
<svg class="abs" style="left:1888px;top:534px;overflow:visible" width="24" height="24" viewBox="0 0 24 24" ><path d="M3,0.800H22V19.600H3ZM7.750,0.800V19.600M12.500,0.800V19.600M17.250,0.800V19.600M3,5.500H22M3,10.200H22M3,14.900H22" fill="none" stroke="#1a6bff" stroke-width="1"/><path d="M0.300,5.200H19V23.700H0.300ZM5,5.200V23.700M9.650,5.200V23.700M14.300,5.200V23.700M0.300,9.800H19M0.300,14.400H19M0.300,19.100H19" fill="none" stroke="#00a4ac" stroke-width="1"/><path d="M0.0,18.5 C3.5,11.5 11.5,11.5 15.0,18.5 C11.5,25.5 3.5,25.5 0.0,18.5Z" fill="#ffffff" stroke="#2a2e32" stroke-width="0.8"/><circle cx="7.5" cy="18.5" r="3.400" fill="#2b2b2b"/><circle cx="6.5" cy="17.3" r="0.900" fill="#fff"/></svg>
<svg class="abs" style="left:1888px;top:567px;overflow:visible" width="24" height="24" viewBox="0 0 24 24" ><path d="M3.400,17V4M9.600,13.600L20,3.300M11,20.500H20" stroke="#dd2c00" stroke-width="2" fill="none"/><polygon points="3.400,0.300 6.800,6 0,6" fill="#dd2c00"/><polygon points="22.800,0.500 20.500,7 16.300,2.800" fill="#dd2c00"/><polygon points="23.500,20.500 18,17.200 18,23.800" fill="#dd2c00"/><path d="M0.0,17.4 C3.5,10.399999999999999 11.5,10.399999999999999 15.0,17.4 C11.5,24.4 3.5,24.4 0.0,17.4Z" fill="#ffffff" stroke="#2a2e32" stroke-width="0.8"/><circle cx="7.5" cy="17.4" r="3.400" fill="#2b2b2b"/><circle cx="6.5" cy="16.2" r="0.900" fill="#fff"/></svg>
<svg class="abs" style="left:1888px;top:599px;overflow:visible" width="24" height="24" viewBox="0 0 24 24" ><path d="M3.400,17V4M9.600,13.600L20,3.300M11,20.500H20" stroke="#c6d9ea" stroke-width="3" fill="none"/><polygon points="3.400,0.300 6.800,6 0,6" fill="#c6d9ea"/><polygon points="22.800,0.500 20.500,7 16.300,2.800" fill="#c6d9ea"/><polygon points="23.500,20.500 18,17.200 18,23.800" fill="#c6d9ea"/><path d="M0.0,17.7 C3.5,10.7 11.5,10.7 15.0,17.7 C11.5,24.7 3.5,24.7 0.0,17.7Z" fill="#ffffff" stroke="#2a2e32" stroke-width="0.8"/><path d="M5.2,15.399999999999999L9.8,20.0M9.8,15.399999999999999L5.2,20.0" stroke="#222" stroke-width="1.100"/></svg>
<svg class="abs" style="left:1888px;top:630px;overflow:visible" width="24" height="24" viewBox="0 0 24 24" ><defs><linearGradient id="ct" x1="0" y1="0" x2="0" y2="1"><stop offset="0" stop-color="#3a3a3a"/><stop offset="1" stop-color="#cfcfcf"/></linearGradient></defs><polygon points="15.500,0.500 22.500,5 15.500,9 8.700,5" fill="url(#ct)"/><polygon points="8.700,5 15.500,9 15.500,17.500 8.700,13" fill="#f0c800"/><polygon points="22.500,5 15.500,9 15.500,17.500 22.500,13" fill="#c9a200"/><path d="M0.0,18.5 C3.5,11.5 11.5,11.5 15.0,18.5 C11.5,25.5 3.5,25.5 0.0,18.5Z" fill="#ffffff" stroke="#2a2e32" stroke-width="0.8"/><circle cx="7.5" cy="18.5" r="3.400" fill="#2b2b2b"/><circle cx="6.5" cy="17.3" r="0.900" fill="#fff"/></svg>
<svg class="abs" style="left:1888px;top:662px;overflow:visible" width="24" height="24" viewBox="0 0 24 24" ><path d="M6.600,1V23.300M16.700,1V23.300M0.500,7H23M0.500,16.800H23" stroke="#e6e6e6" stroke-width="2.200"/><path d="M0.0,18.9 C3.5,11.899999999999999 11.5,11.899999999999999 15.0,18.9 C11.5,25.9 3.5,25.9 0.0,18.9Z" fill="#ffffff" stroke="#2a2e32" stroke-width="0.8"/><path d="M5.2,16.599999999999998L9.8,21.2M9.8,16.599999999999998L5.2,21.2" stroke="#222" stroke-width="1.100"/></svg>
<!--RTB_END--></div>
  <!-- STATUS -->
  <div id="status">
    <svg class="abs" style="left:5px;top:1000px" width="20" height="20" viewBox="0 0 20 20"><defs><linearGradient id="og" x1="0" y1="0" x2="0" y2="1"><stop offset="0" stop-color="#a3a6a8"/><stop offset="1" stop-color="#7b7e80"/></linearGradient></defs><polygon points="6,1.5 14,1.5 18.5,6 18.5,14 14,18.5 6,18.5 1.5,14 1.5,6" fill="url(#og)"/></svg>
    <div class="abs" style="left:28px;top:993px;width:100px;height:14px;border-radius:3px;background:#1e2124;"></div>
    <div class="abs" style="left:28px;top:1013px;width:100px;height:14px;border-radius:3px;background:#1e2124;"></div>
    <svg class="abs" style="left:142px;top:991px" width="16" height="15" viewBox="0 0 16 15"><rect width="16" height="15" fill="#00a9ad"/><path d="M4 0V15M8 0V15M12 0V15M0 3.75H16M0 7.5H16M0 11.25H16" stroke="#05686b" stroke-width="1"/></svg>
    <svg class="abs" style="left:164px;top:992px" width="14" height="14" viewBox="0 0 14 14"><polygon points="2,3 10,3 10,13.5 0.5,13.5 0.5,4.5" fill="#cc0000"/><polygon points="0.5,4 3,1 13,0.5 10,3.5" fill="#ee3333"/><polygon points="10,3.5 13,0.5 13.5,10 10,13.5" fill="#990000"/></svg>
    <div class="t" style="left:187.500px;top:991.500px;height:16px;line-height:16px;font-size:11.2px;font-weight:bold;color:#0a0a0a;letter-spacing:-0.3px;">2D</div>
    <div class="t" style="left:145px;top:1012px;height:18px;line-height:18px;font-size:12.8px;transform:scaleX(0.87);transform-origin:0 0;">CGNS</div>
  </div>
</div>
</body>
</html>
